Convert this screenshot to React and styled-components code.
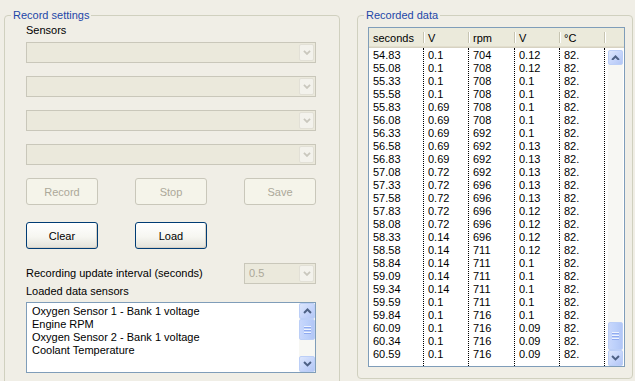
import styled, { createGlobalStyle } from 'styled-components';

const rows = [
  ['54.83', '0.1', '704', '0.12', '82.'],
  ['55.08', '0.1', '708', '0.12', '82.'],
  ['55.33', '0.1', '708', '0.1', '82.'],
  ['55.58', '0.1', '708', '0.1', '82.'],
  ['55.83', '0.69', '708', '0.1', '82.'],
  ['56.08', '0.69', '708', '0.1', '82.'],
  ['56.33', '0.69', '692', '0.1', '82.'],
  ['56.58', '0.69', '692', '0.13', '82.'],
  ['56.83', '0.69', '692', '0.13', '82.'],
  ['57.08', '0.72', '692', '0.13', '82.'],
  ['57.33', '0.72', '696', '0.13', '82.'],
  ['57.58', '0.72', '696', '0.13', '82.'],
  ['57.83', '0.72', '696', '0.12', '82.'],
  ['58.08', '0.72', '696', '0.12', '82.'],
  ['58.33', '0.14', '696', '0.12', '82.'],
  ['58.58', '0.14', '711', '0.12', '82.'],
  ['58.84', '0.14', '711', '0.1', '82.'],
  ['59.09', '0.14', '711', '0.1', '82.'],
  ['59.34', '0.14', '711', '0.1', '82.'],
  ['59.59', '0.1', '711', '0.1', '82.'],
  ['59.84', '0.1', '716', '0.1', '82.'],
  ['60.09', '0.1', '716', '0.09', '82.'],
  ['60.34', '0.1', '716', '0.09', '82.'],
  ['60.59', '0.1', '716', '0.09', '82.'],
];

const columns = [
  { title: 'seconds', width: 55 },
  { title: 'V', width: 45 },
  { title: 'rpm', width: 46 },
  { title: 'V', width: 45 },
  { title: '°C', width: 45 },
];

const sensors = [
  'Oxygen Sensor 1 - Bank 1 voltage',
  'Engine RPM',
  'Oxygen Sensor 2 - Bank 1 voltage',
  'Coolant Temperature',
];

const GlobalStyle = createGlobalStyle`
  html, body {
    margin: 0;
    padding: 0;
    background: #f0eee6;
    overflow: hidden;
  }
  body {
    font-family: "Liberation Sans", Arial, sans-serif;
    font-size: 11px;
    color: #000;
  }
`;

const Window = styled.div`
  display: flex;
  align-items: flex-start;
  gap: 17px;
  padding: 9px 0 0 4px;
  width: 635px;
  height: 381px;
  box-sizing: border-box;
  overflow: hidden;
`;

const Group = styled.fieldset`
  margin: 0;
  padding: 0;
  width: ${p => p.width}px;
  height: ${p => p.height}px;
  box-sizing: border-box;
  border: 1px solid #d0d0bf;
  border-radius: 4px;
  min-width: 0;
  flex-shrink: 0;
`;

const Legend = styled.legend`
  margin-left: 6px;
  padding: 0 2px;
  color: #1d46a8;
  font-size: 11px;
  line-height: 13px;
`;

const SettingsBody = styled.div`
  display: flex;
  flex-direction: column;
  padding: 2px 0 0 21px;
  width: 290px;
`;

const Label = styled.div`
  line-height: 13px;
  height: 13px;
  white-space: nowrap;
`;

const ComboList = styled.div`
  display: flex;
  flex-direction: column;
  gap: 13px;
  margin-top: 5px;
`;

const Combo = styled.div`
  display: flex;
  align-items: center;
  justify-content: space-between;
  width: ${p => p.width || 290}px;
  height: 21px;
  box-sizing: border-box;
  border: 1px solid #c9c7ba;
  background: #ebe9dc;
  padding: 1px;
  color: #aca899;
`;

const ComboValue = styled.span`
  padding-left: 3px;
  line-height: 13px;
`;

const ComboArrow = styled.span`
  display: flex;
  align-items: center;
  justify-content: center;
  width: 15px;
  height: 17px;
  box-sizing: border-box;
  border: 1px solid #e2e0d6;
  border-radius: 2px;
  background: #f3f2ec;
`;

const ButtonGrid = styled.div`
  display: grid;
  grid-template-columns: repeat(3, 72px);
  justify-content: space-between;
  row-gap: 17px;
  margin-top: 13px;
`;

const Button = styled.div`
  display: flex;
  align-items: center;
  justify-content: center;
  height: 27px;
  box-sizing: border-box;
  border-radius: 3px;
  border: 1px solid ${p => (p.disabled ? '#c9c7ba' : '#003c74')};
  background: ${p =>
    p.disabled
      ? '#f5f4ea'
      : 'linear-gradient(180deg, #ffffff 0%, #f6f6f1 55%, #e3e2d9 100%)'};
  color: ${p => (p.disabled ? '#aca899' : '#000')};
  box-shadow: ${p => (p.disabled ? 'none' : 'inset -1px -1px 0 #d6d0c5')};
`;

const IntervalRow = styled.div`
  display: flex;
  align-items: center;
  justify-content: space-between;
  margin-top: 14px;
`;

const SubLabel = styled(Label)`
  margin-top: 1px;
`;

const ListBox = styled.div`
  display: flex;
  margin-top: 4px;
  width: 290px;
  height: 71px;
  box-sizing: border-box;
  border: 1px solid #7f9db9;
  background: #fff;
`;

const ListItems = styled.div`
  flex: 1;
  padding: 2px 0 0 5px;
`;

const ListItem = styled.div`
  line-height: 13px;
  white-space: nowrap;
`;

const ScrollBar = styled.div`
  display: flex;
  flex-direction: column;
  width: ${p => p.width || 16}px;
  background: #f7f7f3;
  flex-shrink: 0;
`;

const ScrollButton = styled.div`
  display: flex;
  align-items: center;
  justify-content: center;
  height: ${p => p.height || 16}px;
  box-sizing: border-box;
  border: 1px solid #bccff7;
  border-radius: 2px;
  background: linear-gradient(135deg, #dde7fd 0%, #c3d3fa 60%, #b3c6f5 100%);
  flex-shrink: 0;
`;

const ScrollThumb = styled(ScrollButton)`
  flex-direction: column;
  gap: 1px;
  background: linear-gradient(90deg, #c8d7fc 0%, #bcd0fb 50%, #b2c6f6 100%);
`;

const Grip = styled.span`
  width: 7px;
  height: 1px;
  background: #eef3fe;
  box-shadow: 0 1px 0 #8faaf0;
  margin-bottom: 1px;
`;

const Track = styled.div`
  flex: 1;
`;

const RecordedBody = styled.div`
  padding: 5px 0 0 10px;
`;

const Table = styled.div`
  display: flex;
  flex-direction: column;
  width: 257px;
  height: 340px;
  box-sizing: border-box;
  border: 1px solid #7f9db9;
  background: #fff;
`;

const HeaderRow = styled.div`
  display: flex;
  height: 20px;
  flex-shrink: 0;
  background: #ebeadb;
  box-shadow: inset 0 -1px 0 #d6d2c2, inset 0 -2px 0 #e2decd;
`;

const HeaderCell = styled.div`
  display: flex;
  align-items: center;
  width: ${p => p.width}px;
  padding-left: 4px;
  box-sizing: border-box;
  position: relative;
  &::after {
    content: '';
    position: absolute;
    right: 0;
    top: 4px;
    bottom: 5px;
    width: 1px;
    background: #c7c5b2;
    box-shadow: 1px 0 0 #fff;
  }
`;

const HeaderFiller = styled.div`
  flex: 1;
`;

const DataArea = styled.div`
  display: flex;
  flex: 1;
  min-height: 0;
`;

const DataColumn = styled.div`
  width: ${p => p.width}px;
  box-sizing: border-box;
  border-right: 1px dotted #000;
  padding: 1px 0 0 4px;
`;

const DataCell = styled.div`
  line-height: 13px;
  height: 13px;
  white-space: nowrap;
`;

const TableScroll = styled.div`
  display: flex;
  justify-content: flex-end;
  flex: 1;
  padding: 2px 1px 0 0;
`;

const Chevron = ({ up, color = '#4d6185', size = 9 }) => (
  <svg width={size} height={size * 0.66} viewBox="0 0 9 6">
    <path
      d={up ? 'M1 5 L4.5 1.5 L8 5' : 'M1 1 L4.5 4.5 L8 1'}
      fill="none"
      stroke={color}
      strokeWidth="2"
    />
  </svg>
);

const DisabledCombo = ({ width, value }) => (
  <Combo width={width}>
    <ComboValue>{value}</ComboValue>
    <ComboArrow>
      <Chevron color="#c9c7bd" size={8} />
    </ComboArrow>
  </Combo>
);

const App = () => {
  return (
    <>
      <GlobalStyle />
      <Window>
        <Group width={336} height={430}>
          <Legend>Record settings</Legend>
          <SettingsBody>
            <Label>Sensors</Label>
            <ComboList>
              <DisabledCombo />
              <DisabledCombo />
              <DisabledCombo />
              <DisabledCombo />
            </ComboList>
            <ButtonGrid>
              <Button disabled>Record</Button>
              <Button disabled>Stop</Button>
              <Button disabled>Save</Button>
              <Button>Clear</Button>
              <Button>Load</Button>
            </ButtonGrid>
            <IntervalRow>
              <Label>Recording update interval (seconds)</Label>
              <DisabledCombo width={72} value="0.5" />
            </IntervalRow>
            <SubLabel>Loaded data sensors</SubLabel>
            <ListBox>
              <ListItems>
                {sensors.map(s => (
                  <ListItem key={s}>{s}</ListItem>
                ))}
              </ListItems>
              <ScrollBar>
                <ScrollButton>
                  <Chevron up />
                </ScrollButton>
                <ScrollThumb height={21}>
                  <Grip />
                  <Grip />
                  <Grip />
                </ScrollThumb>
                <Track />
                <ScrollButton>
                  <Chevron />
                </ScrollButton>
              </ScrollBar>
            </ListBox>
          </SettingsBody>
        </Group>
        <Group width={276} height={370}>
          <Legend>Recorded data</Legend>
          <RecordedBody>
            <Table>
              <HeaderRow>
                {columns.map((c, i) => (
                  <HeaderCell key={i} width={c.width}>
                    {c.title}
                  </HeaderCell>
                ))}
                <HeaderFiller />
              </HeaderRow>
              <DataArea>
                {columns.map((c, ci) => (
                  <DataColumn key={ci} width={c.width}>
                    {rows.map((r, ri) => (
                      <DataCell key={ri}>{r[ci]}</DataCell>
                    ))}
                  </DataColumn>
                ))}
                <TableScroll>
                  <ScrollBar width={15}>
                    <ScrollButton height={15}>
                      <Chevron up />
                    </ScrollButton>
                    <Track />
                    <ScrollThumb height={28}>
                      <Grip />
                      <Grip />
                      <Grip />
                    </ScrollThumb>
                    <ScrollButton height={16}>
                      <Chevron />
                    </ScrollButton>
                  </ScrollBar>
                </TableScroll>
              </DataArea>
            </Table>
          </RecordedBody>
        </Group>
      </Window>
    </>
  );
};

export default App;
